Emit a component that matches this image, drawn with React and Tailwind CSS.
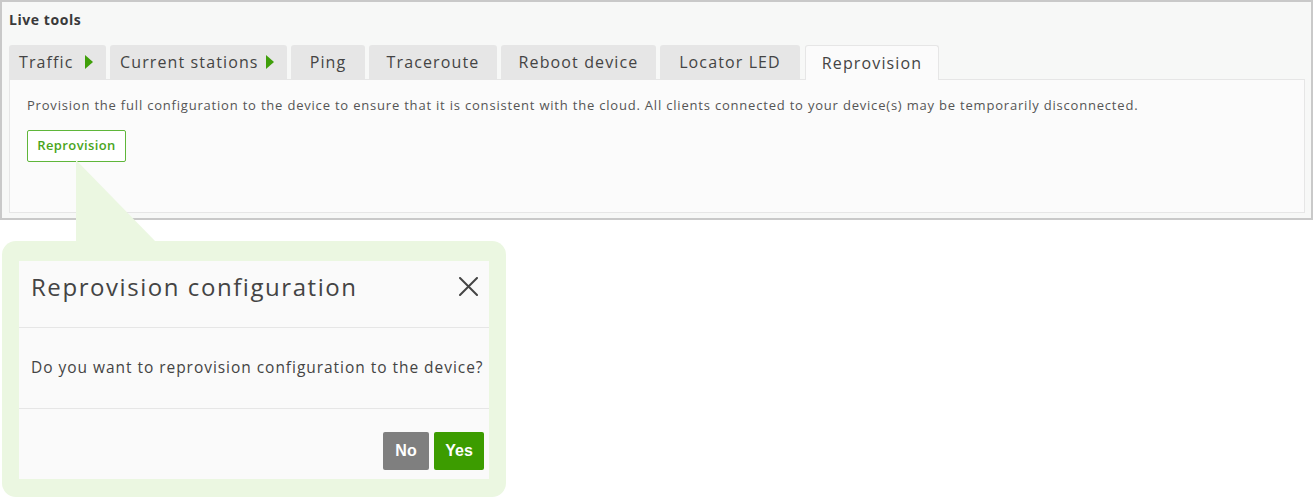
const TABS = [
  { label: "Traffic", w: "w-[97px]", arrow: true },
  { label: "Current stations", w: "w-[177px]", arrow: true },
  { label: "Ping", w: "w-[74px]" },
  { label: "Traceroute", w: "w-[128px]" },
  { label: "Reboot device", w: "w-[155px]" },
  { label: "Locator LED", w: "w-[140px]" },
  { label: "Reprovision", w: "w-[134px]", active: true },
];

function Arrow() {
  return (
    <svg width="8" height="14" viewBox="0 0 8 14" className="ml-auto shrink-0">
      <path d="M0 0 L8 7 L0 14 Z" fill="#3f9f0a" />
    </svg>
  );
}

function CloseIcon() {
  return (
    <svg width="19" height="19" viewBox="0 0 19 19" className="mt-[6px]">
      <path d="M1 1 L18 18 M18 1 L1 18" stroke="#444" strokeWidth="2" strokeLinecap="round" />
    </svg>
  );
}

export default function App() {
  return (
    <div
      className="relative w-[1313px] h-[498px] bg-white text-[#444] tracking-[0.07em]"
      style={{ fontFamily: "'Open Sans', 'Liberation Sans', sans-serif" }}
    >
      <section className="h-[220px] border-2 border-[#c9c9c9] bg-[#f7f8f7] pl-[7px] pr-[6px] pb-[5px] flex flex-col">
        <h2 className="pt-[9px] text-[14px] font-bold text-[#3a3a3a] leading-[18px] tracking-[0.04em]">Live tools</h2>
        <div className="mt-[16px] flex gap-[4px] items-end relative z-10">
          {TABS.map((t) => (
            <div
              key={t.label}
              className={`${t.w} h-[34px] rounded-t-[3px] flex items-center text-[16px] ${
                t.active
                  ? "bg-[#fbfbfb] border border-b-0 border-[#e6e6e6] h-[35px] -mb-px justify-center ml-px"
                  : t.arrow
                  ? "bg-[#e6e6e6] justify-start pl-[10px] pr-[13px]"
                  : "bg-[#e6e6e6] justify-center"
              }`}
            >
              <span>{t.label}</span>
              {t.arrow && <Arrow />}
            </div>
          ))}
        </div>
        <div className="flex-1 bg-[#fbfbfb] border border-[#e6e6e6] px-[17px] pt-[17px]">
          <p className="text-[13px] leading-[16px] text-[#555] tracking-[0.8px]">
            Provision the full configuration to the device to ensure that it is consistent with the cloud. All clients
            connected to your device(s) may be temporarily disconnected.
          </p>
          <button className="mt-[17px] h-[32px] w-[99px] rounded-[2px] border border-[#5fb63a] bg-white text-[13px] font-semibold text-[#4aa51c] tracking-[0.03em]">
            Reprovision
          </button>
        </div>
      </section>

      <svg className="absolute left-0 top-0" width="200" height="260" viewBox="0 0 200 260">
        <polygon points="76,160 76,242 156,242" fill="#ebf7e1" />
      </svg>

      <div className="ml-[2px] mt-[21px] w-[504px] h-[256px] rounded-[14px] bg-[#ebf7e1] pl-[17px] pt-[20px] relative">
        <div className="w-[470px] h-[218px] bg-[#fafafa] flex flex-col">
          <div className="h-[67px] border-b border-[#e6e6e6] flex items-start justify-between pl-[12px] pr-[11px] pt-[10px]">
            <h3 className="text-[24px] leading-[32px] text-[#444] tracking-[0.065em]">Reprovision configuration</h3>
            <CloseIcon />
          </div>
          <div className="h-[81px] border-b border-[#e6e6e6] flex items-center pl-[12px]">
            <p className="text-[15.5px] text-[#444] tracking-[0.062em]">Do you want to reprovision configuration to the device?</p>
          </div>
          <div
            className="flex-1 flex justify-end items-start gap-[5px] pr-[5px] pt-[23px] tracking-normal"
            style={{ fontFamily: "'Liberation Sans', Arial, sans-serif" }}
          >
            <button className="w-[46px] h-[38px] rounded-[2px] bg-[#7f7f7f] text-white text-[16px] font-bold">No</button>
            <button className="w-[50px] h-[38px] rounded-[2px] bg-[#3c9c00] text-white text-[16px] font-bold">Yes</button>
          </div>
        </div>
      </div>
    </div>
  );
}
